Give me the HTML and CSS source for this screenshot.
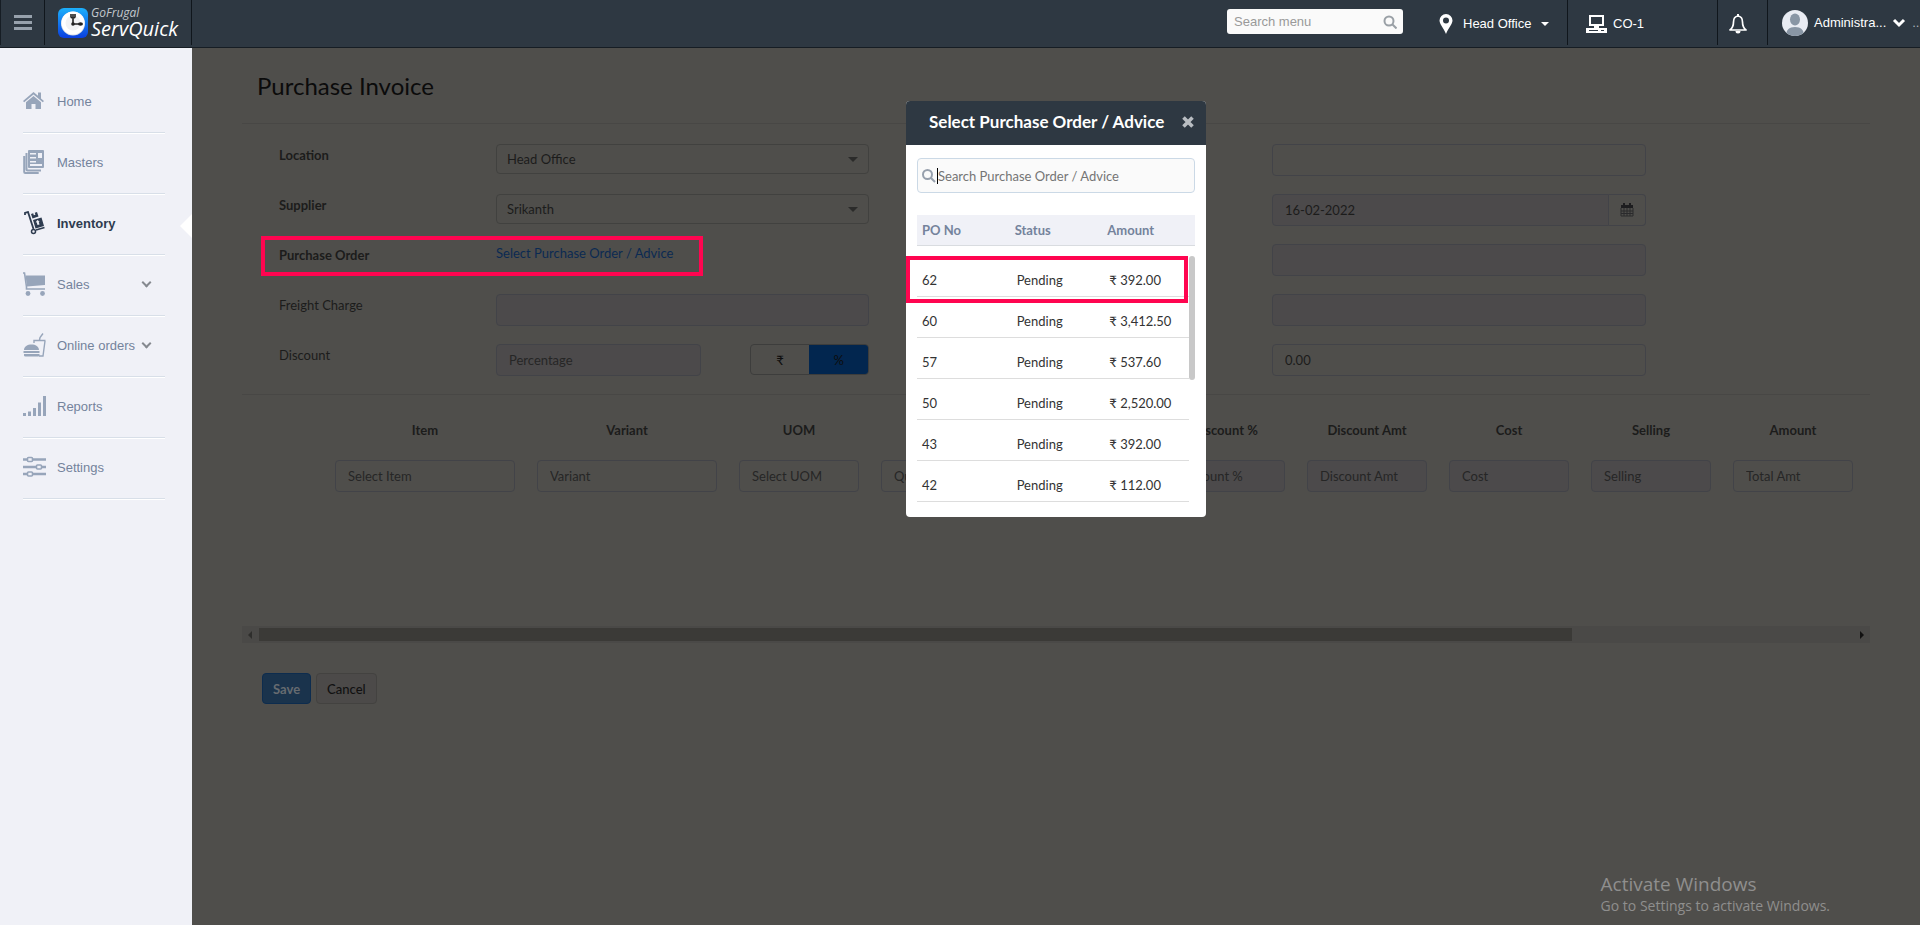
FILE: index.html
```
<!DOCTYPE html>
<html lang="en">
<head>
    <meta charset="UTF-8">
    <meta name="viewport" content="width=device-width, initial-scale=1.0">
    <title>Purchase Invoice</title>
    <link rel="stylesheet" href="styles.css">
</head>
<body>

<header class="topbar">
    <button type="button" class="menu-btn" aria-label="Toggle menu"><span></span><span></span><span></span></button>
    <a href="#" class="logo">
        <svg width="30" height="30" viewBox="0 0 30 30">
            <defs>
                <linearGradient id="logo-bg" x1="0" y1="0" x2="0" y2="1">
                    <stop offset="0" stop-color="#1cb0fb"/>
                    <stop offset="1" stop-color="#0a3fe0"/>
                </linearGradient>
            </defs>
            <rect width="30" height="30" rx="6" fill="url(#logo-bg)"/>
            <circle cx="15" cy="15.500" r="12" fill="#d5dbe4"/>
            <circle cx="15" cy="15" r="11.500" fill="#fff"/>
            <circle cx="15" cy="15" r="7.500" fill="#f1f2f4"/>
            <path d="M15 6v10h8M13 6v3q0 1 2 1t2-1V6" fill="none" stroke="#222" stroke-width="1.600"/>
            <circle cx="15" cy="16" r="1.800" fill="#222"/>
            <ellipse cx="22.500" cy="16" rx="2.500" ry="1.800" fill="#222"/>
        </svg>
        <span class="logo-text"><small>GoFrugal</small><b>ServQuick</b></span>
    </a>
    <form class="menu-search">
        <input type="text" placeholder="Search menu" aria-label="Search menu">
        <svg width="14" height="14" viewBox="0 0 14 14" fill="none" stroke="#9aa0a6" stroke-width="2"><circle cx="6" cy="6" r="4.500"/><path d="M9.500 9.500l4 4"/></svg>
    </form>
    <button type="button" class="top-cell office">
        <svg width="14" height="20" viewBox="0 0 14 20"><path fill="#fff" fill-rule="evenodd" d="M7 0a6.500 6.500 0 0 0-6.500 6.500C.5 10 4.500 14 7 20c2.500-6 6.500-10 6.500-13.500A6.500 6.500 0 0 0 7 0zm0 3.500a3 3 0 1 1 0 6 3 3 0 0 1 0-6z"/></svg>
        <span>Head Office</span>
        <i class="caret"></i>
    </button>
    <button type="button" class="top-cell counter">
        <svg width="21" height="18" viewBox="0 0 21 18" fill="#fff"><path fill-rule="evenodd" d="M3 0h15v11H3zM5 2v7h11V2z"/><path d="M8 11h5v2H8zM0 13h21v5H0z"/><path d="M3 15.500h9M15 15.500h3" stroke="#2e3842"/></svg>
        <span>CO-1</span>
    </button>
    <button type="button" class="top-cell bell" aria-label="Notifications">
        <svg width="20" height="20" viewBox="0 0 20 20"><path d="M10 2c-3 .4-4.500 2.800-4.500 6 0 4-1 6-3.500 8h16c-2.500-2-3.500-4-3.500-8 0-3.200-1.500-5.600-4.500-6z" fill="none" stroke="#fff" stroke-width="1.700" stroke-linejoin="round"/><path d="M9 0h2v3H9zM7.500 17h5a2.500 2.500 0 0 1-5 0z" fill="#fff"/></svg>
    </button>
    <button type="button" class="top-cell user">
        <svg width="26" height="26" viewBox="0 0 26 26"><clipPath id="face"><circle cx="13" cy="13" r="13"/></clipPath><g clip-path="url(#face)"><rect width="26" height="26" fill="#e9ecf3"/><ellipse cx="13" cy="9.500" rx="5" ry="6" fill="#8996a5"/><path d="M4 26c0-6 3-9 9-9s9 3 9 9z" fill="#8996a5"/></g></svg>
        <span>Administra...</span>
        <svg width="14" height="10" viewBox="0 0 14 10"><path d="M2 2l5 5 5-5" fill="none" stroke="#fff" stroke-width="3"/></svg>
        <span class="more">..</span>
    </button>
</header>

<div class="page">
    <nav class="sidebar">
        <a href="#"><svg width="24" height="24" viewBox="0 0 24 24"><path d="M10.500 3L0 12l1.200 1.300L10.500 5.500l9.300 7.800L21 12l-3-2.600V3.500h-3v3.300z"/><path d="M10.500 7L3 13.300V20h5.500v-5h4v5H18v-6.700z"/></svg><span>Home</span></a>
        <a href="#"><svg width="24" height="24" viewBox="0 0 24 24"><path fill-rule="evenodd" d="M6 0h14a1 1 0 0 1 1 1v16a1 1 0 0 1-1 1H6a1 1 0 0 1-1-1V1a1 1 0 0 1 1-1zM7 3v1.500h6V3zm0 4v1.500h6V7zm0 4v1.500h6V11zm8-8v5h4V3zM7 14v2h12v-2z"/><path d="M3.500 3v16.500a1 1 0 0 0 1 1H18M1.200 6v16a1 1 0 0 0 1 1h13.500" fill="none" stroke="#97a5ba" stroke-width="2"/></svg><span>Masters</span></a>
        <a href="#" class="active"><svg width="24" height="24" viewBox="0 0 24 24"><path d="M2 4V2l3-1 5.500 17" fill="none" stroke="#2e3c50" stroke-width="1.800"/><path d="M8 3l2.200-.7.600 1.900 1.600-.5-.600-1.900L14 1l1.500 4.500L9.500 7.500zM10 9l8.500-2.500 2.500 8.500-8.500 2.500z"/><path d="M14.500 14l-.8-2.700-1 .3 1.500-2.500 2.500 1.300-1 .3.800 2.700z" fill="#f0f1f7"/><path d="M13 19l8.500-2.500" stroke="#2e3c50" stroke-width="1.600"/><circle cx="10.500" cy="20.500" r="2" fill="none" stroke="#2e3c50" stroke-width="1.500"/></svg><span>Inventory</span></a>
        <a href="#"><svg width="24" height="24" viewBox="0 0 24 24"><path d="M2.500 3.500H22V13L4 14.500z"/><path d="M0 1h1.500L3.500 15v2H22" fill="none" stroke="#97a5ba" stroke-width="1.600"/><circle cx="5" cy="21.500" r="2.400"/><circle cx="19.500" cy="21.500" r="2.400"/></svg><span>Sales</span><i class="chev"></i></a>
        <a href="#"><svg width="24" height="24" viewBox="0 0 24 24"><path d="M1 17c0-3.500 3.500-5.500 7.500-5.500S16 13.500 16 17zM.5 18h16v2H.5zM1 21h15.500v1.500q0 1-1.500 1H2.500q-1.500 0-1.500-1z"/><path d="M11 10V7.500h11.500M22 8l-2 15h-4M16.500 7L17 4.500 20 .5" fill="none" stroke="#97a5ba" stroke-width="1.400"/></svg><span>Online orders</span><i class="chev"></i></a>
        <a href="#"><svg width="24" height="24" viewBox="0 0 24 24"><path d="M0 19h3v3H0zM5 17.500h3V22H5zM10 14h3v8h-3zM15 8.500h3V22h-3zM20 2h3v20h-3z"/></svg><span>Reports</span></a>
        <a href="#"><svg width="24" height="24" viewBox="0 0 24 24"><path d="M0 4.500h23M0 12h23M0 19h23" stroke="#97a5ba" stroke-width="2.600"/><g fill="#f0f1f7" stroke="#97a5ba" stroke-width="1.600"><rect x="4.500" y="2.500" width="5" height="4" rx="1"/><rect x="13.500" y="10" width="5" height="4" rx="1"/><rect x="4.500" y="17" width="5" height="4" rx="1"/></g></svg><span>Settings</span></a>
    </nav>

    <main class="content">
        <h1>Purchase Invoice</h1>

        <form class="invoice-form">
            <label class="name" for="location">Location</label>
            <div class="select-box"><select id="location"><option>Head Office</option></select></div>
            <input class="field right" type="text" aria-label="Invoice number">

            <label class="name" for="supplier">Supplier</label>
            <div class="select-box"><select id="supplier"><option>Srikanth</option></select></div>
            <div class="date-box right">
                <input class="field off" type="text" value="16-02-2022" aria-label="Date">
                <button type="button" aria-label="Open calendar"><svg width="14" height="14" viewBox="0 0 14 14"><path d="M1 2h12v3H1zM3 0h2v3H3zM9 0h2v3H9z" fill="#1d1d1f"/><path d="M1 5v8h12V5M1 8h12M1 10.500h12M4 5v8M7 5v8M10 5v8" fill="none" stroke="#2a2a2c"/></svg></button>
            </div>

            <span class="name">Purchase Order</span>
            <div class="po-link"><a href="#">Select Purchase Order / Advice</a></div>
            <input class="field off right" type="text" aria-label="Reference">

            <label class="name thin" for="freight">Freight Charge</label>
            <input class="field off" id="freight" type="text">
            <input class="field off right" type="text" aria-label="Charges">

            <label class="name thin" for="discount">Discount</label>
            <div class="discount">
                <input class="field off" id="discount" type="text" placeholder="Percentage">
                <div class="toggle"><button type="button">₹</button><button type="button" class="on">%</button></div>
            </div>
            <input class="field right" type="text" value="0.00" aria-label="Total">

            <span class="mark mark-po"></span>
        </form>

        <div class="items">
            <table>
                <thead>
                    <tr>
                        <th class="lead"></th><th class="wide">Item</th><th class="wide">Variant</th><th>UOM</th><th>Quantity</th><th>Price</th><th>Discount %</th><th>Discount Amt</th><th>Cost</th><th>Selling</th><th>Amount</th>
                    </tr>
                </thead>
                <tbody>
                    <tr>
                        <td></td>
                        <td><input class="field" type="text" placeholder="Select Item" aria-label="Item"></td>
                        <td><input class="field" type="text" placeholder="Variant" aria-label="Variant"></td>
                        <td><input class="field" type="text" placeholder="Select UOM" aria-label="UOM"></td>
                        <td><input class="field" type="text" placeholder="Quantity" aria-label="Quantity"></td>
                        <td><input class="field" type="text" placeholder="Price" aria-label="Price"></td>
                        <td><input class="field off" type="text" placeholder="Discount %" aria-label="Discount %"></td>
                        <td><input class="field off" type="text" placeholder="Discount Amt" aria-label="Discount Amt"></td>
                        <td><input class="field off" type="text" placeholder="Cost" aria-label="Cost"></td>
                        <td><input class="field off" type="text" placeholder="Selling" aria-label="Selling"></td>
                        <td><input class="field" type="text" placeholder="Total Amt" aria-label="Amount"></td>
                    </tr>
                </tbody>
            </table>
        </div>
        <div class="hscroll"><i class="arrow-left"></i><div class="track"><div class="thumb"></div></div><i class="arrow-right"></i></div>

        <div class="actions">
            <button type="button" class="save">Save</button>
            <button type="button" class="cancel">Cancel</button>
        </div>

        <div class="modal-layer">
            <section class="modal" role="dialog" aria-labelledby="modal-title">
                <div class="modal-head">
                    <h2 id="modal-title">Select Purchase Order / Advice</h2>
                    <button type="button" aria-label="Close"><svg width="12" height="12" viewBox="0 0 12 12"><path d="M1.500 1.500l9 9M10.500 1.500l-9 9" stroke="#b9bdc2" stroke-width="3.600"/></svg></button>
                </div>
                <div class="modal-body">
                    <div class="po-search">
                        <svg width="14" height="14" viewBox="0 0 14 14" fill="none" stroke="#97a0ad" stroke-width="2"><circle cx="5.500" cy="5.500" r="4.500"/><path d="M9 9l4 4"/></svg>
                        <i class="cursor"></i>
                        <input type="text" placeholder="Search Purchase Order / Advice" aria-label="Search Purchase Order / Advice">
                    </div>
                    <table class="po-table">
                        <thead><tr><th>PO No</th><th>Status</th><th>Amount</th></tr></thead>
                        <tbody>
                            <tr><td>62</td><td>Pending</td><td>₹ 392.00</td></tr>
                            <tr><td>60</td><td>Pending</td><td>₹ 3,412.50</td></tr>
                            <tr><td>57</td><td>Pending</td><td>₹ 537.60</td></tr>
                            <tr><td>50</td><td>Pending</td><td>₹ 2,520.00</td></tr>
                            <tr><td>43</td><td>Pending</td><td>₹ 392.00</td></tr>
                            <tr><td>42</td><td>Pending</td><td>₹ 112.00</td></tr>
                        </tbody>
                    </table>
                </div>
                <div class="vscroll"><div class="vthumb"></div></div>
                <span class="mark mark-row"></span>
            </section>
        </div>

        <div class="watermark"><p>Activate Windows</p><p class="small">Go to Settings to activate Windows.</p></div>
    </main>
</div>

</body>
</html>
```
FILE: styles.css
```
* {
    box-sizing: border-box;
}

body {
    margin: 0;
    min-height: 100vh;
    display: flex;
    flex-direction: column;
    font-family: Lato, "Liberation Sans", sans-serif;
    font-size: 13px;
    background: #4f4e4b;
}

button {
    font: inherit;
    cursor: pointer;
    padding: 0;
}

a {
    text-decoration: none;
}

/* top bar */
.topbar {
    display: flex;
    align-items: flex-start;
    height: 48px;
    background: #2e3842;
    border-bottom: 1px solid #161d24;
    font-family: "Liberation Sans", Arial, sans-serif;
}

.menu-btn {
    width: 45px;
    height: 45px;
    display: flex;
    flex-direction: column;
    justify-content: center;
    align-items: center;
    gap: 3px;
    background: none;
    border: 0;
    border-left: 1px solid #161d24;
    border-right: 1px solid #10161c;
}

.menu-btn span {
    width: 18px;
    height: 3px;
    background: #97a1ac;
}

.logo {
    width: 147px;
    height: 45px;
    display: flex;
    align-items: center;
    gap: 3px;
    padding-left: 13px;
    border-right: 1px solid #10161c;
    color: #fff;
    font-family: "Open Sans", sans-serif;
    font-style: italic;
}

.logo-text {
    display: flex;
    flex-direction: column;
}

.logo-text small {
    font-size: 12px;
    line-height: 12px;
    color: #c3c8cd;
}

.logo-text b {
    font-size: 20px;
    line-height: 20px;
    font-weight: 400;
}

.menu-search {
    display: flex;
    align-items: center;
    width: 176px;
    height: 25px;
    margin: 9px 36px 0 auto;
    padding: 0 6px 0 7px;
    background: #fafafa;
    border-radius: 3px;
}

.menu-search input {
    flex: 1;
    min-width: 0;
    border: 0;
    padding: 0;
    background: none;
    font: inherit;
    outline: none;
}

.menu-search input::placeholder {
    color: #999;
}

.top-cell {
    display: flex;
    align-items: center;
    height: 45px;
    background: none;
    border: 0;
    border-right: 1px solid #10161c;
    color: #fff;
}

.office {
    width: 129px;
    padding-top: 2px;
    gap: 10px;
}

.caret {
    border: 4px solid transparent;
    border-top-color: #fff;
    border-bottom: 0;
}

.counter {
    width: 150px;
    padding: 2px 0 0 18px;
    gap: 6px;
}

.bell {
    width: 50px;
    padding: 2px 0 0 10px;
}

.user {
    width: 152px;
    padding-left: 14px;
    gap: 6px;
    border-right: 0;
}

.more {
    color: #aab2ba;
}

.page {
    flex: 1;
    display: flex;
}

/* side menu */
.sidebar {
    width: 192px;
    flex: none;
    padding: 24px 27px 0 23px;
    background: #f0f1f7;
    font-family: "Liberation Sans", Arial, sans-serif;
}

.sidebar a {
    position: relative;
    display: flex;
    align-items: center;
    height: 61px;
    padding-bottom: 2px;
    color: #74839c;
    border-bottom: 1px solid #d8dfe8;
    box-shadow: 0 1px 0 #fff;
    white-space: nowrap;
}

.sidebar svg {
    flex: none;
    margin-right: 10px;
    fill: #97a5ba;
}

.sidebar .active {
    color: #2e3c50;
    font-weight: bold;
}

.sidebar .active svg {
    fill: #2e3c50;
}

/* notch pointing at the current item */
.sidebar .active::after {
    content: "";
    position: absolute;
    right: -27px;
    top: 20px;
    width: 12px;
    height: 24px;
    background: #fff;
    clip-path: polygon(100% 0, 0 50%, 100% 100%);
}

.chev {
    width: 7px;
    height: 7px;
    margin: 0 15px 4px auto;
    border: solid #85898f;
    border-width: 0 2px 2px 0;
    transform: rotate(45deg);
}

/* invoice page */
.content {
    position: relative;
    flex: 1;
    min-width: 0;
    padding: 22px 50px 0;
    color: #1c1c1b;
}

h1 {
    margin: 0;
    padding: 0 15px 21px;
    font-size: 24px;
    line-height: 32px;
    font-weight: 400;
    color: #0b0b0b;
}

.invoice-form {
    position: relative;
    display: grid;
    grid-template-columns: 217fr 373fr 403fr 374fr 224fr;
    row-gap: 18px;
    align-items: start;
    padding: 20px 0 18px 37px;
    border-top: 1px solid #484745;
    border-bottom: 1px solid #484745;
}

.name {
    grid-column: 1;
    line-height: 22px;
    font-weight: bold;
}

.thin {
    font-weight: 400;
}

.right {
    grid-column: 4;
}

.field {
    width: 100%;
    height: 32px;
    padding: 0 12px;
    border: 1px solid #424348;
    border-radius: 4px;
    background: transparent;
    color: #1c1c1b;
    font: inherit;
}

.field::placeholder {
    color: #262626;
}

.off {
    background: #4c4a4b;
}

.select-box {
    position: relative;
}

.select-box select {
    display: block;
    width: 100%;
    height: 30px;
    padding: 0 10px;
    appearance: none;
    border: 1px solid #41413f;
    border-radius: 4px;
    background: transparent;
    color: #1c1c1b;
    font: inherit;
}

.select-box::after {
    content: "";
    position: absolute;
    right: 11px;
    top: 13px;
    border: 5px solid transparent;
    border-top-color: #2b2b2a;
    border-bottom: 0;
}

.date-box {
    display: flex;
}

.date-box .field {
    flex: 1;
    min-width: 0;
    border-radius: 4px 0 0 4px;
}

.date-box button {
    width: 37px;
    border: 1px solid #424348;
    border-left: 0;
    border-radius: 0 4px 4px 0;
    background: none;
}

.date-box svg {
    display: block;
    margin: auto;
}

.po-link {
    height: 32px;
    line-height: 18px;
}

.po-link a {
    color: #0b2a52;
}

.discount {
    display: flex;
    justify-content: space-between;
}

.discount .field {
    width: 55%;
}

.toggle {
    display: flex;
    width: 32%;
    height: 31px;
    border: 1px solid #3d3d3c;
    border-radius: 4px;
    overflow: hidden;
}

.toggle button {
    flex: 1;
    border: 0;
    background: none;
    color: #0d0d0d;
}

.toggle .on {
    background: #02264f;
}

.items {
    overflow: hidden;
    padding: 0 6px 134px 0;
}

.items table {
    width: 100%;
    table-layout: fixed;
    border-collapse: collapse;
}

.items th {
    width: 142px;
    padding: 24px 11px 19px;
    line-height: 22px;
}

.items .lead {
    width: 82px;
}

.items .wide {
    width: 202px;
}

.items td {
    padding: 0 11px;
}

.items .field {
    display: block;
}

.hscroll {
    display: flex;
    align-items: center;
    justify-content: space-between;
    height: 17px;
    padding: 0 6px;
    background: #4a4947;
}

.track {
    flex: 1;
    margin: 0 7px;
}

.thumb {
    width: calc(100% * 14 / 17);
    height: 13px;
    background: #3b3a37;
}

.arrow-left,
.arrow-right {
    border: 4px solid transparent;
}

.arrow-left {
    border-left: 0;
    border-right-color: #2e2e2c;
}

.arrow-right {
    border-right: 0;
    border-left-color: #111;
}

.actions {
    display: flex;
    gap: 5px;
    padding: 30px 20px;
}

.actions button {
    height: 31px;
    padding: 0 10px;
    border: 1px solid #434240;
    border-radius: 4px;
    background: #4c4a49;
    color: #111;
}

.actions .save {
    background: #1a334c;
    border-color: #0d2c4e;
    color: #666b70;
    font-weight: bold;
}

.actions .cancel {
    font-weight: 500;
}

/* pink highlight frames */
.mark {
    position: absolute;
    border: 4px solid #ff0550;
    pointer-events: none;
}

.mark-po {
    left: 19px;
    top: 112px;
    width: 442px;
    height: 40px;
}

.mark-row {
    left: 0;
    top: 155px;
    width: 282px;
    height: 47px;
}

/* purchase order dialog */
.modal-layer {
    position: absolute;
    inset: 0;
    display: flex;
    justify-content: center;
    align-items: flex-start;
    padding-top: 53px;
}

.modal {
    position: relative;
    width: 300px;
    border-radius: 4px;
    overflow: hidden;
    background: #fff;
    color: #333;
}

.modal-head {
    display: flex;
    align-items: center;
    justify-content: space-between;
    height: 44px;
    padding: 0 12px 2px 23px;
    background: #2e3842;
}

.modal-head h2 {
    margin: 0;
    font-size: 17px;
    line-height: 22px;
    color: #fff;
    white-space: nowrap;
}

.modal-head button {
    display: flex;
    border: 0;
    background: none;
}

.modal-body {
    padding: 13px 11px 15px;
}

.po-search {
    display: flex;
    align-items: center;
    height: 35px;
    padding: 0 4px;
    border: 1px solid #cbd9e6;
    border-radius: 4px;
    background: #fafafa;
}

.cursor {
    width: 1px;
    height: 16px;
    margin-left: 1px;
    background: #000;
}

.po-search input {
    flex: 1;
    min-width: 0;
    padding: 0;
    border: 0;
    background: none;
    font: inherit;
    outline: none;
}

.po-search input::placeholder {
    color: #757575;
}

.po-table {
    width: 100%;
    margin-top: 22px;
    table-layout: fixed;
    border-collapse: separate;
    border-spacing: 0;
}

.po-table th {
    height: 31px;
    padding: 0 5px;
    text-align: left;
    color: #74839c;
    background: #f0f1f7;
    border-bottom: 1px solid #d9dce0;
}

.po-table td {
    height: 41px;
    padding: 8px 7px 0;
    border-bottom: 1px solid #ddd;
}

.po-table td:first-child {
    padding-left: 5px;
}

.po-table tbody::before {
    content: "";
    display: block;
    height: 10px;
}

.vscroll {
    position: absolute;
    right: 11px;
    top: 155px;
    bottom: 10px;
    width: 6px;
    background: #fff;
}

.vthumb {
    height: 124px;
    border-radius: 3px;
    background: #c8c8c8;
}

.watermark {
    position: absolute;
    right: 90px;
    bottom: 9px;
    color: #8f8f8e;
    font-family: "Open Sans", "Noto Sans", sans-serif;
}

.watermark p {
    margin: 0;
    font-size: 19px;
    line-height: 24px;
}

.watermark .small {
    font-size: 14px;
    line-height: 20px;
}
```
